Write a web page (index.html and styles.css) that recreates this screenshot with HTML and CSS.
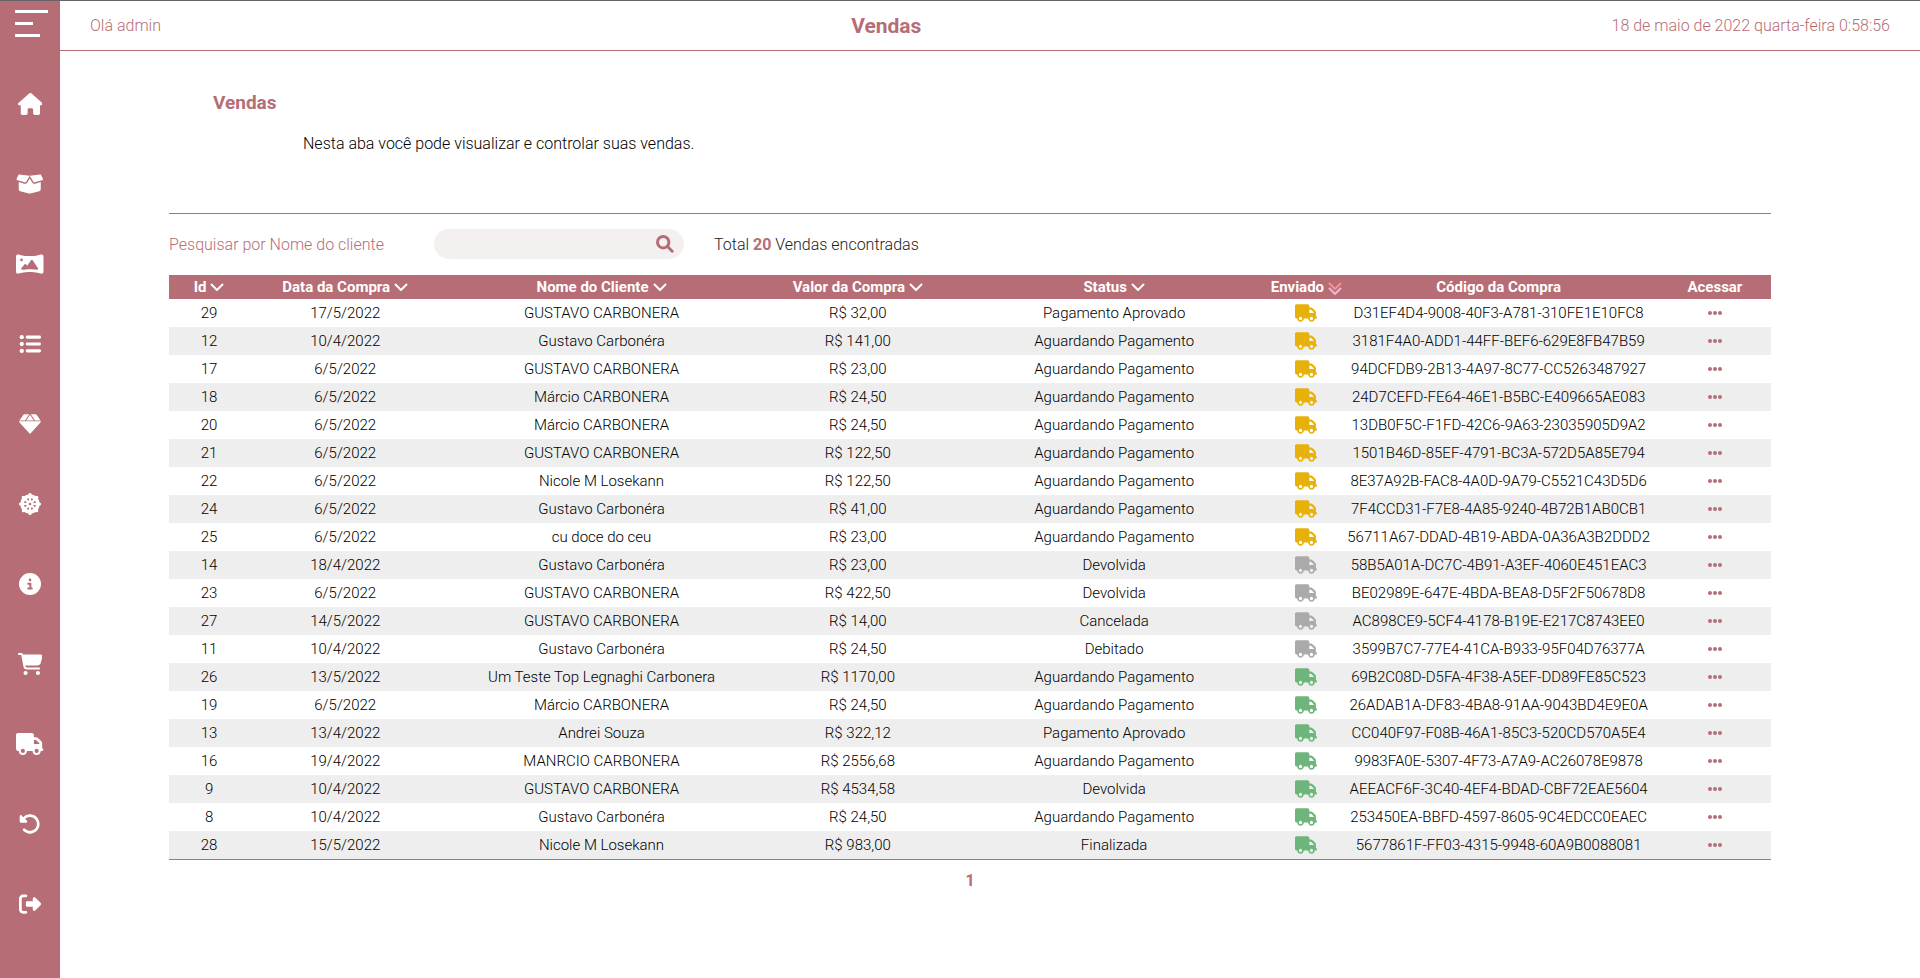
FILE: index.html
```
<!DOCTYPE html>
<html lang="pt-BR">
<head>
<meta charset="utf-8">
<title>Vendas</title>
<link rel="stylesheet" href="styles.css">
</head>
<body>
<svg class="sprite" aria-hidden="true">
<symbol id="truck" viewBox="0 0 640 512"><path d="M48 0C21.5 0 0 21.5 0 48V368c0 26.5 21.5 48 48 48H64c0 53 43 96 96 96s96-43 96-96H384c0 53 43 96 96 96s96-43 96-96h32c17.7 0 32-14.3 32-32s-14.3-32-32-32V288 256 237.3c0-17-6.7-33.3-18.7-45.3L512 114.7c-12-12-28.3-18.7-45.3-18.7H416V48c0-26.5-21.5-48-48-48H48zM416 160h50.7L544 237.3V256H416V160zM112 416a48 48 0 1 1 96 0 48 48 0 1 1 -96 0zm368-48a48 48 0 1 1 0 96 48 48 0 1 1 0-96z"/></symbol>
<symbol id="chevron" viewBox="0 0 14 16"><path d="M1.5 5.5L7 11l5.500-5.500" fill="none" stroke="currentColor" stroke-width="2" stroke-linecap="round" stroke-linejoin="round"/></symbol>
<symbol id="dots" viewBox="0 0 16 16"><circle cx="3" cy="8" r="2"/><circle cx="8" cy="8" r="2"/><circle cx="13" cy="8" r="2"/></symbol>
</svg>
<nav class="sidebar" aria-label="Menu principal">
<button class="menu" type="button" aria-label="Abrir menu"><span class="bar long"></span><span class="bar short"></span><span class="bar medium"></span></button>
<a class="nav-link" href="#inicio" aria-label="Início"><svg class="icon" viewBox="0 0 576 512"><path d="M575.8 255.5c0 18-15 32.1-32 32.1h-32l.7 160.2c0 2.7-.2 5.4-.5 8.1V472c0 22.1-17.9 40-40 40H456c-1.1 0-2.2 0-3.3-.1c-1.4 .1-2.8 .1-4.2 .1H416 392c-22.1 0-40-17.9-40-40V448 384c0-17.7-14.3-32-32-32H256c-17.7 0-32 14.3-32 32v64 24c0 22.1-17.9 40-40 40H160 128.1c-1.5 0-3-.1-4.5-.2c-1.2 .1-2.4 .2-3.6 .2H104c-22.1 0-40-17.9-40-40V360c0-.9 0-1.9 .1-2.8V287.6H32c-18 0-32-14-32-32.1c0-9 3-17 10-24L266.4 8c7-7 15-8 22-8s15 2 21 7L564.8 231.5c8 7 12 15 11 24z"/></svg></a>
<a class="nav-link" href="#produtos" aria-label="Produtos"><svg class="icon" viewBox="0 0 640 512"><path d="M58.9 42.1c3-6.1 9.6-9.6 16.3-8.7L320 64 564.8 33.4c6.7-.8 13.3 2.7 16.3 8.7l41.7 83.4c9 17.9-.6 39.6-19.8 45.1L439.6 217.3c-13.9 4-28.8-1.9-36.2-14.3L320 64 236.6 203c-7.4 12.4-22.3 18.3-36.2 14.3L37.1 170.6c-19.3-5.5-28.8-27.2-19.8-45.1L58.9 42.1zM321.1 128l54.9 91.4c14.9 24.8 44.6 36.6 72.5 28.6L576 211.6v167c0 22-15 41.2-36.4 46.6l-204.1 51c-10.2 2.6-20.9 2.6-31 0l-204.1-51C79 419.7 64 400.5 64 378.5v-167L191.6 248c27.8 8 57.6-3.8 72.5-28.6L318.9 128h2.2z"/></svg></a>
<a class="nav-link" href="#banners" aria-label="Banners"><svg class="icon" viewBox="0 0 640 512"><path d="M45.6 32C20.4 32 0 52.4 0 77.6V434.4C0 459.6 20.4 480 45.6 480c5.1 0 10-.8 14.7-2.4C74.6 472.8 177.6 440 320 440s245.4 32.8 259.6 37.6c4.7 1.6 9.7 2.4 14.7 2.4c25.2 0 45.6-20.4 45.6-45.6V77.6C640 52.4 619.6 32 594.4 32c-5 0-10 .8-14.7 2.4C565.4 39.2 462.4 72 320 72S74.6 39.2 60.4 34.4C55.6 32.8 50.7 32 45.6 32zM96 160a32 32 0 1 1 64 0 32 32 0 1 1 -64 0zm272 0c7.9 0 15.4 3.9 19.8 10.5L512.3 353c5.4 8 5.6 18.4 .4 26.5s-14.7 12.3-24.2 10.7C442.7 382.4 385.2 376 320 376c-65.6 0-123.4 6.5-169.3 14.4c-9.8 1.7-19.7-2.9-24.7-11.5s-4.3-19.4 1.9-27.2L197.3 265c4.6-5.7 11.4-9 18.7-9s14.2 3.3 18.7 9l26.4 33.1 87-127.6c4.5-6.6 11.9-10.5 19.8-10.5z"/></svg></a>
<a class="nav-link" href="#categorias" aria-label="Categorias"><svg class="icon" viewBox="0 0 512 512"><circle cx="64" cy="96" r="50"/><circle cx="64" cy="256" r="50"/><circle cx="64" cy="416" r="50"/><rect x="156" y="60" width="356" height="72" rx="34"/><rect x="156" y="220" width="356" height="72" rx="34"/><rect x="156" y="380" width="356" height="72" rx="34"/></svg></a>
<a class="nav-link" href="#materiais" aria-label="Materiais"><svg class="icon" viewBox="0 0 512 512"><path d="M102 38L10 172H140L236 28H120Q108 28 102 38zM276 28L372 172H502L410 38Q404 28 392 28zM256 42L168 172H344zM2 190H510Q512 204 504 213L272 474Q256 488 240 474L8 213Q0 204 2 190z"/></svg></a>
<a class="nav-link" href="#configuracoes" aria-label="Configurações"><svg class="icon" viewBox="0 0 512 512"><g fill="none" stroke="currentColor"><circle cx="256" cy="256" r="184" stroke-width="86"/><circle cx="256" cy="256" r="56" stroke-width="60"/><path d="M256 30V482M30 256H482M96 96L416 416M416 96L96 416" stroke-width="50" stroke-linecap="round"/></g><circle cx="256" cy="36" r="36"/><circle cx="256" cy="476" r="36"/><circle cx="36" cy="256" r="36"/><circle cx="476" cy="256" r="36"/><circle cx="99" cy="99" r="36"/><circle cx="413" cy="99" r="36"/><circle cx="99" cy="413" r="36"/><circle cx="413" cy="413" r="36"/><circle class="hub" cx="256" cy="256" r="30"/></svg></a>
<a class="nav-link" href="#informacoes" aria-label="Informações"><svg class="icon" viewBox="0 0 512 512"><path d="M256 512A256 256 0 1 0 256 0a256 256 0 1 0 0 512zM216 336h24V272H216c-13.3 0-24-10.7-24-24s10.7-24 24-24h48c13.3 0 24 10.7 24 24v88h8c13.3 0 24 10.7 24 24s-10.7 24-24 24H216c-13.3 0-24-10.7-24-24s10.7-24 24-24zm40-208a32 32 0 1 1 0 64 32 32 0 1 1 0-64z"/></svg></a>
<a class="nav-link" href="#vendas" aria-label="Vendas"><svg class="icon" viewBox="0 0 576 512"><path d="M0 24C0 10.7 10.7 0 24 0H69.5c22 0 41.5 12.8 50.6 32h411c26.3 0 45.5 25 38.6 50.4l-41 152.3c-8.5 31.4-37 53.3-69.5 53.3H170.7l5.4 28.5c2.2 11.3 12.1 19.5 23.6 19.5H488c13.3 0 24 10.7 24 24s-10.7 24-24 24H199.7c-34.6 0-64.3-24.6-70.7-58.5L77.4 54.5c-.7-3.8-4-6.5-7.9-6.5H24C10.7 48 0 37.3 0 24zM128 464a48 48 0 1 1 96 0 48 48 0 1 1 -96 0zm336-48a48 48 0 1 1 0 96 48 48 0 1 1 0-96z"/></svg></a>
<a class="nav-link" href="#entregas" aria-label="Entregas"><svg class="icon" viewBox="0 0 640 512"><use href="#truck"/></svg></a>
<a class="nav-link" href="#devolucoes" aria-label="Devoluções"><svg class="icon" viewBox="0 0 512 512"><path d="M48.5 224H40c-13.3 0-24-10.7-24-24V72c0-9.7 5.8-18.5 14.8-22.2s19.3-1.7 26.2 5.2L98.6 96.600c87.600-86.500 228.700-86.200 315.800 1c87.500 87.500 87.500 229.300 0 316.800s-229.300 87.500-316.800 0c-12.500-12.500-12.500-32.800 0-45.300s32.800-12.500 45.300 0c62.500 62.500 163.800 62.500 226.300 0s62.500-163.800 0-226.300c-62.200-62.200-162.700-62.500-225.300-1L185 183c6.900 6.900 8.900 17.200 5.200 26.200s-12.500 14.800-22.200 14.800H48.500z"/></svg></a>
<a class="nav-link" href="#sair" aria-label="Sair"><svg class="icon" viewBox="0 0 512 512"><path d="M377.9 105.900L500.700 228.700c7.200 7.200 11.300 17.100 11.300 27.300s-4.100 20.100-11.300 27.300L377.900 406.100c-6.400 6.400-15 9.900-24 9.900c-18.700 0-33.900-15.200-33.900-33.900l0-62.100-128 0c-17.700 0-32-14.300-32-32l0-64c0-17.700 14.300-32 32-32l128 0 0-62.100c0-18.700 15.200-33.900 33.900-33.900c9 0 17.600 3.600 24 9.900zM160 96L96 96c-17.700 0-32 14.300-32 32l0 256c0 17.700 14.300 32 32 32l64 0c17.700 0 32 14.300 32 32s-14.300 32-32 32l-64 0c-53 0-96-43-96-96L0 128C0 75 43 32 96 32l64 0c17.700 0 32 14.300 32 32s-14.300 32-32 32z"/></svg></a>
</nav>
<div class="page">
<header class="topbar"><span>Olá admin</span><h1 class="topbar-title">Vendas</h1><time datetime="2022-05-18T00:58:56">18 de maio de 2022 quarta-feira 0:58:56</time></header>
<main class="content">
<section class="intro"><h2 class="intro-title">Vendas</h2><p class="intro-text">Nesta aba você pode visualizar e controlar suas vendas.</p></section>
<form class="search">
<label class="search-label" for="cliente">Pesquisar por Nome do cliente</label>
<div class="search-box"><input class="search-input" id="cliente" type="text"><button class="search-button" type="button" aria-label="Pesquisar"><svg class="search-icon" viewBox="0 0 18 18"><circle cx="7.2" cy="7.2" r="5.7"/><path d="M11.5 11.5L16.2 16.2"/></svg></button></div>
<p class="total">Total <strong class="count">20</strong> Vendas encontradas</p>
</form>
<table class="sales">
<colgroup><col class="c5"><col class="c12"><col class="c20"><col class="c12"><col class="c20"><col class="c4"><col class="c20"><col class="c7"></colgroup>
<thead><tr>
<th><button class="sort" type="button">Id <svg class="chev"><use href="#chevron"/></svg></button></th>
<th><button class="sort" type="button">Data da Compra <svg class="chev"><use href="#chevron"/></svg></button></th>
<th><button class="sort" type="button">Nome do Cliente <svg class="chev"><use href="#chevron"/></svg></button></th>
<th><button class="sort" type="button">Valor da Compra <svg class="chev"><use href="#chevron"/></svg></button></th>
<th><button class="sort" type="button">Status <svg class="chev"><use href="#chevron"/></svg></button></th>
<th><button class="sort" type="button">Enviado <svg class="chev" viewBox="0 0 14 16"><g fill="none" stroke-width="2" stroke-linecap="round" stroke-linejoin="round"><path d="M1.5 4.500L7 10l5.500-5.500" stroke="#ff8f8f"/><path d="M1.500 9.500L7 15L12.500 9.500" stroke="#f5b5d2"/></g></svg></button></th>
<th>Código da Compra</th><th>Acessar</th>
</tr></thead>
<tbody>
<tr><td>29</td><td>17/5/2022</td><td>GUSTAVO CARBONERA</td><td>R$ 32,00</td><td>Pagamento Aprovado</td><td><svg class="truck pending"><use href="#truck"/></svg></td><td>D31EF4D4-9008-40F3-A781-310FE1E10FC8</td><td><a class="open" href="#v29" aria-label="Acessar venda 29"><svg class="dots"><use href="#dots"/></svg></a></td></tr>
<tr><td>12</td><td>10/4/2022</td><td>Gustavo Carbonéra</td><td>R$ 141,00</td><td>Aguardando Pagamento</td><td><svg class="truck pending"><use href="#truck"/></svg></td><td>3181F4A0-ADD1-44FF-BEF6-629E8FB47B59</td><td><a class="open" href="#v12" aria-label="Acessar venda 12"><svg class="dots"><use href="#dots"/></svg></a></td></tr>
<tr><td>17</td><td>6/5/2022</td><td>GUSTAVO CARBONERA</td><td>R$ 23,00</td><td>Aguardando Pagamento</td><td><svg class="truck pending"><use href="#truck"/></svg></td><td>94DCFDB9-2B13-4A97-8C77-CC5263487927</td><td><a class="open" href="#v17" aria-label="Acessar venda 17"><svg class="dots"><use href="#dots"/></svg></a></td></tr>
<tr><td>18</td><td>6/5/2022</td><td>Márcio CARBONERA</td><td>R$ 24,50</td><td>Aguardando Pagamento</td><td><svg class="truck pending"><use href="#truck"/></svg></td><td>24D7CEFD-FE64-46E1-B5BC-E409665AE083</td><td><a class="open" href="#v18" aria-label="Acessar venda 18"><svg class="dots"><use href="#dots"/></svg></a></td></tr>
<tr><td>20</td><td>6/5/2022</td><td>Márcio CARBONERA</td><td>R$ 24,50</td><td>Aguardando Pagamento</td><td><svg class="truck pending"><use href="#truck"/></svg></td><td>13DB0F5C-F1FD-42C6-9A63-23035905D9A2</td><td><a class="open" href="#v20" aria-label="Acessar venda 20"><svg class="dots"><use href="#dots"/></svg></a></td></tr>
<tr><td>21</td><td>6/5/2022</td><td>GUSTAVO CARBONERA</td><td>R$ 122,50</td><td>Aguardando Pagamento</td><td><svg class="truck pending"><use href="#truck"/></svg></td><td>1501B46D-85EF-4791-BC3A-572D5A85E794</td><td><a class="open" href="#v21" aria-label="Acessar venda 21"><svg class="dots"><use href="#dots"/></svg></a></td></tr>
<tr><td>22</td><td>6/5/2022</td><td>Nicole M Losekann</td><td>R$ 122,50</td><td>Aguardando Pagamento</td><td><svg class="truck pending"><use href="#truck"/></svg></td><td>8E37A92B-FAC8-4A0D-9A79-C5521C43D5D6</td><td><a class="open" href="#v22" aria-label="Acessar venda 22"><svg class="dots"><use href="#dots"/></svg></a></td></tr>
<tr><td>24</td><td>6/5/2022</td><td>Gustavo Carbonéra</td><td>R$ 41,00</td><td>Aguardando Pagamento</td><td><svg class="truck pending"><use href="#truck"/></svg></td><td>7F4CCD31-F7E8-4A85-9240-4B72B1AB0CB1</td><td><a class="open" href="#v24" aria-label="Acessar venda 24"><svg class="dots"><use href="#dots"/></svg></a></td></tr>
<tr><td>25</td><td>6/5/2022</td><td>cu doce do ceu</td><td>R$ 23,00</td><td>Aguardando Pagamento</td><td><svg class="truck pending"><use href="#truck"/></svg></td><td>56711A67-DDAD-4B19-ABDA-0A36A3B2DDD2</td><td><a class="open" href="#v25" aria-label="Acessar venda 25"><svg class="dots"><use href="#dots"/></svg></a></td></tr>
<tr><td>14</td><td>18/4/2022</td><td>Gustavo Carbonéra</td><td>R$ 23,00</td><td>Devolvida</td><td><svg class="truck closed"><use href="#truck"/></svg></td><td>58B5A01A-DC7C-4B91-A3EF-4060E451EAC3</td><td><a class="open" href="#v14" aria-label="Acessar venda 14"><svg class="dots"><use href="#dots"/></svg></a></td></tr>
<tr><td>23</td><td>6/5/2022</td><td>GUSTAVO CARBONERA</td><td>R$ 422,50</td><td>Devolvida</td><td><svg class="truck closed"><use href="#truck"/></svg></td><td>BE02989E-647E-4BDA-BEA8-D5F2F50678D8</td><td><a class="open" href="#v23" aria-label="Acessar venda 23"><svg class="dots"><use href="#dots"/></svg></a></td></tr>
<tr><td>27</td><td>14/5/2022</td><td>GUSTAVO CARBONERA</td><td>R$ 14,00</td><td>Cancelada</td><td><svg class="truck closed"><use href="#truck"/></svg></td><td>AC898CE9-5CF4-4178-B19E-E217C8743EE0</td><td><a class="open" href="#v27" aria-label="Acessar venda 27"><svg class="dots"><use href="#dots"/></svg></a></td></tr>
<tr><td>11</td><td>10/4/2022</td><td>Gustavo Carbonéra</td><td>R$ 24,50</td><td>Debitado</td><td><svg class="truck closed"><use href="#truck"/></svg></td><td>3599B7C7-77E4-41CA-B933-95F04D76377A</td><td><a class="open" href="#v11" aria-label="Acessar venda 11"><svg class="dots"><use href="#dots"/></svg></a></td></tr>
<tr><td>26</td><td>13/5/2022</td><td>Um Teste Top Legnaghi Carbonera</td><td>R$ 1170,00</td><td>Aguardando Pagamento</td><td><svg class="truck sent"><use href="#truck"/></svg></td><td>69B2C08D-D5FA-4F38-A5EF-DD89FE85C523</td><td><a class="open" href="#v26" aria-label="Acessar venda 26"><svg class="dots"><use href="#dots"/></svg></a></td></tr>
<tr><td>19</td><td>6/5/2022</td><td>Márcio CARBONERA</td><td>R$ 24,50</td><td>Aguardando Pagamento</td><td><svg class="truck sent"><use href="#truck"/></svg></td><td>26ADAB1A-DF83-4BA8-91AA-9043BD4E9E0A</td><td><a class="open" href="#v19" aria-label="Acessar venda 19"><svg class="dots"><use href="#dots"/></svg></a></td></tr>
<tr><td>13</td><td>13/4/2022</td><td>Andrei Souza</td><td>R$ 322,12</td><td>Pagamento Aprovado</td><td><svg class="truck sent"><use href="#truck"/></svg></td><td>CC040F97-F08B-46A1-85C3-520CD570A5E4</td><td><a class="open" href="#v13" aria-label="Acessar venda 13"><svg class="dots"><use href="#dots"/></svg></a></td></tr>
<tr><td>16</td><td>19/4/2022</td><td>MANRCIO CARBONERA</td><td>R$ 2556,68</td><td>Aguardando Pagamento</td><td><svg class="truck sent"><use href="#truck"/></svg></td><td>9983FA0E-5307-4F73-A7A9-AC26078E9878</td><td><a class="open" href="#v16" aria-label="Acessar venda 16"><svg class="dots"><use href="#dots"/></svg></a></td></tr>
<tr><td>9</td><td>10/4/2022</td><td>GUSTAVO CARBONERA</td><td>R$ 4534,58</td><td>Devolvida</td><td><svg class="truck sent"><use href="#truck"/></svg></td><td>AEEACF6F-3C40-4EF4-BDAD-CBF72EAE5604</td><td><a class="open" href="#v9" aria-label="Acessar venda 9"><svg class="dots"><use href="#dots"/></svg></a></td></tr>
<tr><td>8</td><td>10/4/2022</td><td>Gustavo Carbonéra</td><td>R$ 24,50</td><td>Aguardando Pagamento</td><td><svg class="truck sent"><use href="#truck"/></svg></td><td>253450EA-BBFD-4597-8605-9C4EDCC0EAEC</td><td><a class="open" href="#v8" aria-label="Acessar venda 8"><svg class="dots"><use href="#dots"/></svg></a></td></tr>
<tr><td>28</td><td>15/5/2022</td><td>Nicole M Losekann</td><td>R$ 983,00</td><td>Finalizada</td><td><svg class="truck sent"><use href="#truck"/></svg></td><td>5677861F-FF03-4315-9948-60A9B0088081</td><td><a class="open" href="#v28" aria-label="Acessar venda 28"><svg class="dots"><use href="#dots"/></svg></a></td></tr>
</tbody>
</table>
<nav class="pages" aria-label="Paginação"><a class="page-link" href="#pagina-1">1</a></nav>
</main>
</div>
</body>
</html>
```

FILE: styles.css
```
:root { --rose: #b66d75; }
* { box-sizing: border-box; margin: 0; padding: 0; }
body {
  display: flex;
  min-height: 100vh;
  border-top: 1px solid #66646b;
  background: #fff;
  color: #000;
  font: 300 16px/24px Roboto, "Liberation Sans", sans-serif;
}
button { border: 0; background: none; color: inherit; font: inherit; cursor: pointer; }
a { color: inherit; text-decoration: none; }
svg { fill: currentColor; }
.sprite { position: absolute; width: 0; height: 0; }

.sidebar {
  display: flex;
  flex: none;
  flex-direction: column;
  width: 60px;
  background: var(--rose);
  color: #fff;
}
.menu {
  display: flex;
  flex-direction: column;
  gap: 9px;
  height: 63px;
  padding: 9px 0 0 15px;
}
.bar { height: 3px; background: #fff; }
.long { width: 33px; }
.short { width: 18px; }
.medium { width: 25px; }
.nav-link { display: flex; align-items: center; justify-content: center; height: 80px; }
.icon { height: 22px; }
.hub { fill: var(--rose); }

.page { flex: 1; min-width: 0; }
.topbar {
  display: flex;
  align-items: center;
  justify-content: space-between;
  height: 50px;
  padding: 0 30px;
  border-bottom: 1px solid var(--rose);
  color: var(--rose);
}
.topbar-title { font-size: 21px; font-weight: 700; }

.content { padding: 0 149px 0 109px; }
.intro { height: 163px; padding: 40px 44px 0; border-bottom: 1px solid var(--rose); }
.intro-title { color: var(--rose); font-size: 19px; font-weight: 700; }
.intro-text { margin-top: 17px; padding-left: 90px; }
.search { display: flex; align-items: flex-start; height: 61px; padding-top: 15px; }
.search-label { width: 265px; padding-top: 4px; color: var(--rose); }
.search-box {
  display: flex;
  width: 250px;
  height: 30px;
  border-radius: 15px;
  background: #f4f0f0;
}
.search-input {
  flex: 1;
  min-width: 0;
  padding-left: 15px;
  border: 0;
  outline: 0;
  background: none;
  font: inherit;
}
.search-button { display: flex; align-items: center; width: 28px; }
.search-icon {
  width: 18px;
  height: 18px;
  fill: none;
  stroke: var(--rose);
  stroke-width: 3;
  stroke-linecap: round;
}
.total { margin-left: 30px; padding-top: 4px; color: #222; }
.count { color: var(--rose); font-weight: 700; }

.sales {
  width: 100%;
  border-collapse: collapse;
  border-bottom: 1px solid var(--rose);
  table-layout: fixed;
  font-size: 15px;
  text-align: center;
  white-space: nowrap;
}
.c4 { width: 4%; }
.c5 { width: 5%; }
.c7 { width: 7%; }
.c12 { width: 12%; }
.c20 { width: 20%; }
th { height: 24px; background: var(--rose); color: #fff; font-weight: 700; }
th:nth-child(6) { display: flex; justify-content: center; }
.sort { display: inline-flex; align-items: center; gap: 4px; }
.chev { width: 14px; height: 16px; }
td { height: 28px; }
tbody tr:nth-child(even) { background: #eee; }
.truck { display: block; width: 22px; height: 18px; margin: 0 auto; }
.pending { color: #e7b10a; }
.closed { color: #aaa; }
.sent { color: #6db57a; }
.open { display: flex; justify-content: center; color: var(--rose); }
.dots { width: 16px; height: 16px; }
.pages { display: flex; justify-content: center; padding-top: 9px; color: var(--rose); font-weight: 700; }
```
